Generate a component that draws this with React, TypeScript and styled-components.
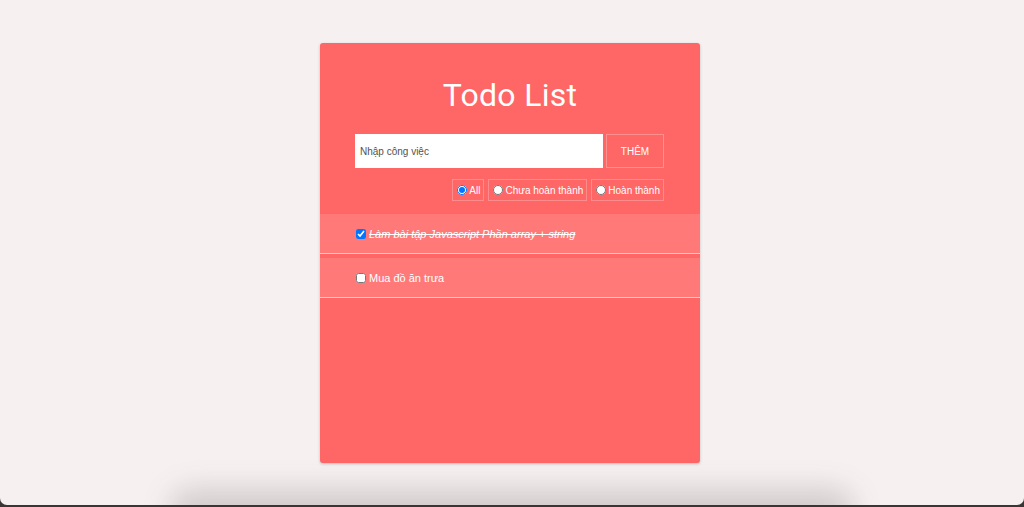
import React, { useState } from "react";
import styled, { createGlobalStyle } from "styled-components";

const GlobalStyle = createGlobalStyle`
  html, body {
    margin: 0;
    padding: 0;
    background: #3a3636;
    height: 507px;
    overflow: hidden;
  }
  * { box-sizing: border-box; }
`;

const Screen = styled.div`
  position: relative;
  height: 505px;
  background: #f6f0f0;
  border-radius: 0 0 7px 7px;
  overflow: hidden;
  display: flex;
  justify-content: center;
  padding: 43px 4px 0 0;
`;

const DockShadow = styled.div`
  position: absolute;
  left: 170px;
  right: 170px;
  bottom: -30px;
  height: 46px;
  background: rgba(70, 60, 60, 0.2);
  filter: blur(14px);
  border-radius: 30px;
  pointer-events: none;
`;

const Card = styled.div`
  width: 380px;
  height: 420px;
  background: #ff6666;
  border-radius: 3px;
  box-shadow: 0 1px 3px rgba(0, 0, 0, 0.22);
  padding-top: 33px;
  display: flex;
  flex-direction: column;
`;

const Title = styled.h1`
  margin: 0;
  font-family: Roboto, "Liberation Sans", sans-serif;
  font-weight: 400;
  font-size: 32px;
  line-height: 38px;
  color: #ffffff;
  text-align: center;
  letter-spacing: 0.3px;
`;

const AddRow = styled.div`
  display: flex;
  gap: 3px;
  margin: 20px 36px 0 35px;
  height: 34px;
`;

const TaskInput = styled.input`
  flex: 1;
  min-width: 0;
  border: none;
  outline: none;
  background: #ffffff;
  padding: 0 5px;
  font-family: "Liberation Sans", Arial, sans-serif;
  font-size: 10px;
  color: #333;
  &::placeholder {
    color: #555050;
  }
`;

const AddButton = styled.button`
  width: 58px;
  background: transparent;
  border: 1px solid rgba(255, 255, 255, 0.28);
  color: #ffffff;
  font-family: "Liberation Sans", Arial, sans-serif;
  font-size: 10px;
  padding: 0;
  cursor: pointer;
`;

const FilterRow = styled.div`
  display: flex;
  justify-content: flex-end;
  gap: 4px;
  margin: 11px 36px 0 35px;
`;

const FilterBox = styled.label`
  display: flex;
  align-items: center;
  height: 22px;
  padding: 0 3px 0 4px;
  border: 1px solid rgba(255, 255, 255, 0.25);
  color: #ffffff;
  font-family: "Liberation Sans", Arial, sans-serif;
  font-size: 10px;
  cursor: pointer;
`;

const Radio = styled.input`
  width: 10px;
  height: 10px;
  margin: 0 2px 0 0;
`;

const List = styled.ul`
  list-style: none;
  margin: 13px 0 0;
  padding: 0;
  display: flex;
  flex-direction: column;
  gap: 4px;
`;

const Item = styled.li`
  display: flex;
  align-items: center;
  height: 40px;
  padding-left: 36px;
  background: rgba(255, 255, 255, 0.13);
  border-bottom: 1px solid rgba(255, 255, 255, 0.6);
`;

const Check = styled.input`
  width: 10px;
  height: 10px;
  margin: 0 3px 0 0;
`;

const ItemText = styled.span<{ $done: boolean }>`
  color: #ffffff;
  font-family: "Liberation Sans", Arial, sans-serif;
  font-size: 11px;
  font-style: ${(p) => (p.$done ? "italic" : "normal")};
  text-decoration: ${(p) => (p.$done ? "line-through" : "none")};
`;

type Todo = { id: number; text: string; done: boolean };

export default function App() {
  const [filter, setFilter] = useState("all");
  const [todos, setTodos] = useState<Todo[]>([
    { id: 1, text: "Làm bài tập Javascript Phần array + string", done: true },
    { id: 2, text: "Mua đồ ăn trưa", done: false },
  ]);

  const toggle = (id: number) =>
    setTodos((t) => t.map((x) => (x.id === id ? { ...x, done: !x.done } : x)));

  const filters = [
    { key: "all", label: "All" },
    { key: "todo", label: "Chưa hoàn thành" },
    { key: "done", label: "Hoàn thành" },
  ];

  return (
    <>
      <GlobalStyle />
      <Screen>
        <Card>
          <Title>Todo List</Title>
          <AddRow>
            <TaskInput placeholder="Nhập công việc" />
            <AddButton>THÊM</AddButton>
          </AddRow>
          <FilterRow>
            {filters.map((f) => (
              <FilterBox key={f.key}>
                <Radio
                  type="radio"
                  name="filter"
                  checked={filter === f.key}
                  onChange={() => setFilter(f.key)}
                />
                {f.label}
              </FilterBox>
            ))}
          </FilterRow>
          <List>
            {todos.map((t) => (
              <Item key={t.id}>
                <Check type="checkbox" checked={t.done} onChange={() => toggle(t.id)} />
                <ItemText $done={t.done}>{t.text}</ItemText>
              </Item>
            ))}
          </List>
        </Card>
        <DockShadow />
      </Screen>
    </>
  );
}
